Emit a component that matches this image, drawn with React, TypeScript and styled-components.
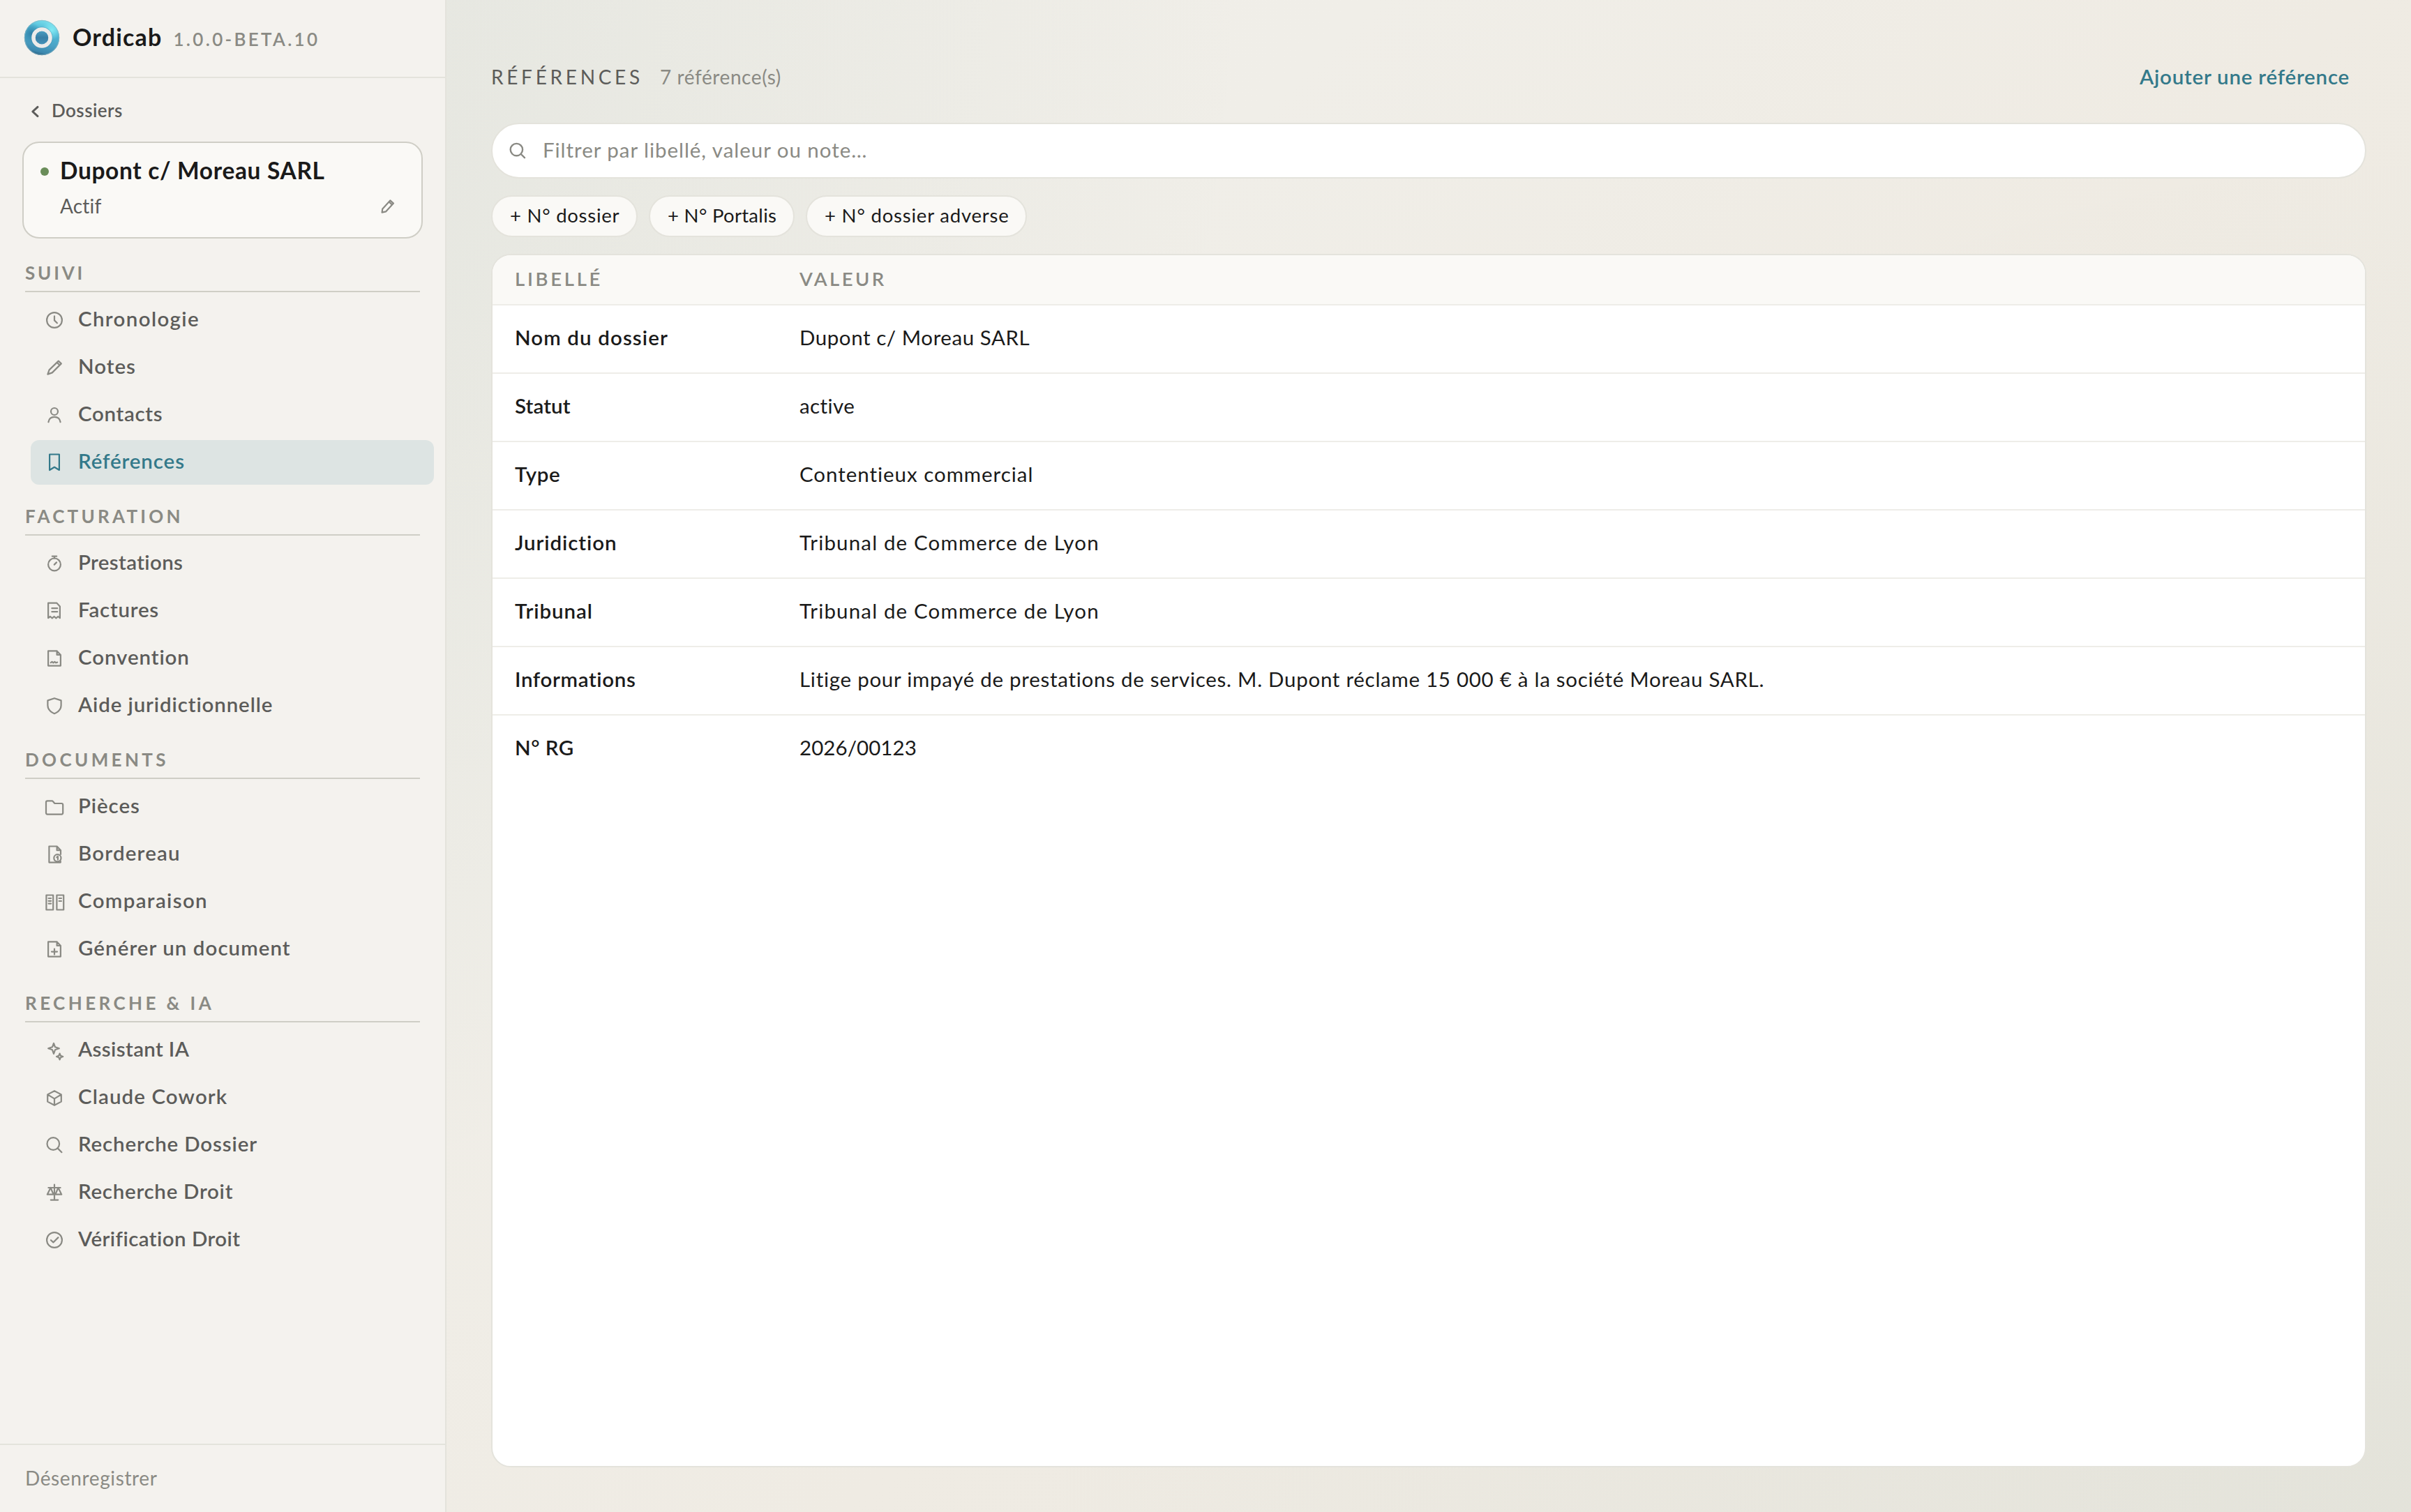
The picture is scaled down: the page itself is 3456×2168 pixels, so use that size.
import React from "react";
import styled, { createGlobalStyle, css } from "styled-components";

const color = {
  ink: "#1a1a1a",
  body: "#5c5c5a",
  muted: "#8a8a84",
  accent: "#33798a",
  accentSoft: "#dde4e3",
  sidebar: "#f4f2ee",
  surface: "#faf9f6",
  line: "#e4e3dc",
  lineSoft: "#eeede8",
  lineStrong: "#cfcec6",
};

const GlobalStyle = createGlobalStyle`
  * { box-sizing: border-box; }
  html, body { margin: 0; padding: 0; }
  body {
    font-family: Lato, "Open Sans", sans-serif;
    font-variant-ligatures: none;
    color: ${color.ink};
  }
  button { font: inherit; color: inherit; background: none; border: 0; padding: 0; margin: 0; }
`;

/* ---------- shell ---------- */

const Shell = styled.div`
  display: flex;
  width: 100vw;
  height: 100vh;
  overflow: hidden;
  background:
    radial-gradient(circle 1800px at 0 0, rgba(90, 130, 110, 0.1), rgba(90, 130, 110, 0) 100%),
    radial-gradient(circle 2000px at 100% 100%, rgba(90, 130, 110, 0.06), rgba(90, 130, 110, 0) 100%),
    linear-gradient(135deg, #f1efea 0%, #f0eee8 35%, #efebe3 60%, #ece9e1 100%);
`;

const Sidebar = styled.aside`
  display: flex;
  flex-direction: column;
  flex: none;
  width: 640px;
  background: ${color.sidebar};
  border-right: 2px solid ${color.line};
`;

const Text = styled.span<{ $track?: number }>`
  letter-spacing: ${(p) => p.$track ?? 0}px;
  white-space: nowrap;
`;

/* ---------- sidebar top ---------- */

const Brand = styled.header`
  display: flex;
  align-items: center;
  height: 112px;
  padding: 0 34px 2px;
  border-bottom: 2px solid ${color.line};
`;

const BrandLine = styled.div`
  display: flex;
  align-items: baseline;
  margin-left: 18px;
  padding-bottom: 2px;
`;

const BrandName = styled(Text)`
  font-size: 34px;
  font-weight: 700;
  line-height: 44px;
`;

const Version = styled(Text)`
  margin-left: 16px;
  font-size: 26px;
  font-weight: 600;
  color: ${color.muted};
`;

const BackLink = styled.button`
  display: flex;
  align-items: center;
  align-self: flex-start;
  gap: 14px;
  height: 40px;
  margin: 28px 0 0 40px;
  color: ${color.body};
`;

const BackLabel = styled(Text)`
  font-size: 26px;
  font-weight: 600;
  line-height: 32px;
  padding-bottom: 4px;
`;

const CaseCard = styled.section`
  display: flex;
  flex-direction: column;
  gap: 12px;
  height: 139px;
  margin: 23px 32px 0;
  padding: 19px 32px 0 24px;
  border: 2px solid ${color.lineStrong};
  border-radius: 24px;
  background: ${color.surface};
`;

const CaseRow = styled.div`
  display: flex;
  align-items: center;
  gap: 16px;
  height: 40px;
`;

const StatusDot = styled.i`
  width: 12px;
  height: 12px;
  margin-top: 3px;
  border-radius: 50%;
  background: #6a8d59;
`;

const CaseName = styled(Text)`
  font-size: 33.5px;
  font-weight: 700;
  line-height: 40px;
`;

const CaseMeta = styled.div`
  display: flex;
  align-items: center;
  justify-content: space-between;
  height: 38px;
  padding-left: 28px;
  color: ${color.muted};
`;

const CaseStatus = styled(Text)`
  font-size: 28px;
  line-height: 36px;
  color: ${color.body};
`;

/* ---------- sidebar nav ---------- */

const Nav = styled.nav`
  display: flex;
  flex-direction: column;
  gap: 29px;
  flex: 1;
  margin-top: 33px;
`;

const Group = styled.section`
  display: flex;
  flex-direction: column;
  gap: 8px;
`;

const GroupTitle = styled.h2<{ $track: number }>`
  height: 44px;
  margin: 0 36px;
  border-bottom: 2px solid ${color.lineStrong};
  font-size: 26px;
  font-weight: 700;
  line-height: 33px;
  letter-spacing: ${(p) => p.$track}px;
  color: ${color.muted};
`;

const Items = styled.div`
  display: flex;
  flex-direction: column;
  gap: 4px;
  margin: 0 16px 0 44px;
`;

const Item = styled.button<{ $active?: boolean }>`
  display: flex;
  align-items: center;
  gap: 20px;
  height: 64px;
  padding-left: 20px;
  border-radius: 12px;
  color: ${color.muted};
  ${(p) =>
    p.$active &&
    css`
      background: ${color.accentSoft};
      color: ${color.accent};
    `}
`;

const ItemLabel = styled(Text)<{ $active?: boolean }>`
  font-size: 29.5px;
  font-weight: 600;
  line-height: 40px;
  padding-bottom: 4px;
  color: ${(p) => (p.$active ? color.accent : color.body)};
`;

const Glyph = styled.svg`
  flex: none;
  width: 28px;
  height: 28px;
  overflow: visible;
  fill: none;
  stroke: currentColor;
  stroke-width: 2.2;
  stroke-linecap: round;
  stroke-linejoin: round;
`;

const Footer = styled.footer`
  display: flex;
  align-items: center;
  height: 98px;
  padding: 0 36px 3px;
  border-top: 2px solid ${color.line};
  font-size: 28px;
  color: ${color.muted};
`;

/* ---------- main ---------- */

const Main = styled.main`
  display: flex;
  flex-direction: column;
  gap: 24px;
  flex: 1;
  min-width: 0;
  padding: 80px 64px 64px;
`;

const Heading = styled.header`
  display: flex;
  align-items: baseline;
  height: 72px;
  padding: 8px 24px 0 0;
  line-height: 44px;
`;

const Title = styled.h1`
  margin: 0;
  font-size: 28px;
  font-weight: 400;
  letter-spacing: 4.7px;
  color: ${color.body};
`;

const Count = styled(Text)`
  margin-left: 24px;
  font-size: 28px;
  color: ${color.muted};
`;

const AddButton = styled.button`
  margin-left: auto;
  font-size: 29.5px;
  font-weight: 600;
  letter-spacing: 0.78px;
  color: ${color.accent};
`;

const Search = styled.label`
  display: flex;
  align-items: center;
  gap: 22px;
  height: 80px;
  padding-left: 22px;
  border: 2px solid ${color.line};
  border-radius: 40px;
  background: #fff;
  color: ${color.muted};
`;

const Placeholder = styled(Text)`
  padding-bottom: 3px;
  font-size: 29.5px;
`;

const Chips = styled.div`
  display: flex;
  gap: 16px;
`;

const Chip = styled.button<{ $width: number }>`
  width: ${(p) => p.$width}px;
  height: 60px;
  padding: 0 0 4px 25px;
  border: 2px solid ${color.line};
  border-radius: 30px;
  background: ${color.surface};
  font-size: 27.5px;
  text-align: left;
`;

const Table = styled.div`
  display: flex;
  flex-direction: column;
  flex: 1;
  overflow: hidden;
  border: 2px solid ${color.line};
  border-radius: 28px;
  background: #fff;
`;

const Row = styled.div`
  display: grid;
  grid-template-columns: 408px 1fr;
  align-items: center;
  flex: none;
  height: 98px;
  padding: 0 32px 6px;
  border-bottom: 2px solid ${color.lineSoft};
  font-size: 29.5px;

  &:last-child { height: 96px; border-bottom: 0; }
`;

const HeadRow = styled(Row)`
  height: 72px;
  padding-bottom: 4px;
  background: ${color.surface};
  font-size: 27.5px;
  font-weight: 600;
  color: ${color.muted};
`;

const Key = styled(Text)`
  font-weight: 600;
`;

/* ---------- drawings ---------- */

const Logo = () => (
  <svg width="52" height="52" viewBox="0 0 52 52">
    <defs>
      <linearGradient id="rim" x1="0.65" y1="0" x2="0.4" y2="1">
        <stop offset="0" stopColor="#7be0ee" />
        <stop offset="0.3" stopColor="#4fb9d6" />
        <stop offset="0.65" stopColor="#4ba3c6" />
        <stop offset="0.9" stopColor="#3d88ae" />
        <stop offset="1" stopColor="#245f82" />
      </linearGradient>
      <radialGradient id="shade" cx="0.2" cy="0.38" r="0.3">
        <stop offset="0" stopColor="#2c7aa3" stopOpacity="0.85" />
        <stop offset="1" stopColor="#2c7aa3" stopOpacity="0" />
      </radialGradient>
      <radialGradient id="gloss" cx="0.78" cy="0.28" r="0.28">
        <stop offset="0" stopColor="#86ecf5" stopOpacity="0.95" />
        <stop offset="1" stopColor="#86ecf5" stopOpacity="0" />
      </radialGradient>
      <linearGradient id="core" x1="0" y1="0" x2="0" y2="1">
        <stop offset="0" stopColor="#4a9cc0" />
        <stop offset="0.5" stopColor="#397fa6" />
        <stop offset="1" stopColor="#4491b8" />
      </linearGradient>
    </defs>
    <circle cx="26" cy="26" r="25.2" fill="url(#rim)" />
    <circle cx="26" cy="26" r="25.2" fill="url(#shade)" />
    <circle cx="26" cy="26" r="25.2" fill="url(#gloss)" />
    <circle cx="26" cy="26" r="24.6" fill="none" stroke="#8fb3bf" strokeWidth="1" opacity="0.7" />
    <circle cx="26" cy="26" r="15.4" fill="#3b86a8" opacity="0.5" />
    <circle cx="26" cy="26" r="12" fill="none" stroke="#ecebea" strokeWidth="5.6" />
    <circle cx="26" cy="26" r="9.2" fill="url(#core)" />
  </svg>
);

const Chevron = () => (
  <svg width="20" height="24" viewBox="0 0 20 24" fill="none" stroke="currentColor" strokeWidth="3" strokeLinecap="round" strokeLinejoin="round">
    <path d="M14 5.4 6.8 12 14 18.6" />
  </svg>
);

const PencilGlyph = styled.svg`
  flex: none;
  width: 32px;
  height: 28px;
  fill: none;
  stroke: currentColor;
  stroke-width: 2.2;
  stroke-linejoin: round;
`;

const EditPencil = () => (
  <PencilGlyph viewBox="0 0 28 28">
    <path d="M5.6 23.6 6.3 18.4 17.3 6.4 22 10.6 11 22.4 Z M15.6 8.4 20.2 12.6" />
  </PencilGlyph>
);

const SearchGlyph = () => (
  <svg width="28" height="28" viewBox="0 0 28 28" fill="none" stroke="currentColor" strokeWidth="2.4" strokeLinecap="round">
    <circle cx="12.4" cy="12.6" r="8.7" />
    <path d="M18.8 19 24 24.2" />
  </svg>
);

const sheet = "M17.6 3.4H5.1V24.6H22.9V9Z M17.6 3.4V9H22.9";

const glyphs: Record<string, React.ReactNode> = {
  clock: (
    <>
      <circle cx="14" cy="14" r="10.9" />
      <path d="M14 8.4V14.4L17.9 18.2" />
    </>
  ),
  pen: <path d="M4.4 23.6 6.6 17.4 19.8 4.6 23.8 8.4 10.8 21.4Z M17.6 6.8 21.6 10.6" />,
  person: (
    <>
      <circle cx="14" cy="9" r="5" />
      <path d="M5.4 24.2C6.2 19.6 9.6 16.9 14 16.9S21.8 19.6 22.6 24.2" />
    </>
  ),
  bookmark: <path d="M7.1 2.5H20.9V25L14 20.8 7.1 25Z" />,
  stopwatch: (
    <>
      <circle cx="14" cy="15.4" r="8.9" />
      <path d="M10.8 3.6H17.2M14 3.6V6.4M13.8 15.6 17 12.4" />
    </>
  ),
  receipt: (
    <path d="M5.1 24.2V2.6H17.2L21.9 7.4V24.2L19.2 22 16.4 24.4 13.6 22 10.8 24.4 8 22Z M10.4 10.2H18.2M10.4 15.2H18.2" />
  ),
  contract: (
    <>
      <path d={sheet} />
      <path d="M8.8 20.2 10.6 18.8 12.4 20.4 14.4 18.9 16.2 20.3 18.2 19.6" />
    </>
  ),
  shield: <path d="M14 3.2 23.6 6.4V13.4C23.6 19 19.6 22.8 14 25.2 8.4 22.8 4.4 19 4.4 13.4V6.4Z" />,
  folder: (
    <path d="M2 7.4Q2 5.4 4 5.4H10.4Q11.4 5.4 12 6.2L14.4 9H24.2Q26.2 9 26.2 11V22.6Q26.2 24.6 24.2 24.6H4Q2 24.6 2 22.6Z" />
  ),
  inventory: (
    <>
      <path d="M13 25.6H6.4V2.5H17.6L23 8.2V14 M17.6 2.5V8.2H23 M13 25.6H22.8V24" />
      <circle cx="18.4" cy="19.3" r="5.1" />
      <path d="M17.4 18.2 18.9 17V21.6" />
    </>
  ),
  compare: (
    <>
      <path d="M2.4 4.5H12.2V25.5H2.4Z M17.4 4.5H27.2V25.5H17.4Z" />
      <path d="M5.6 9H9.2M5.6 12.8H9.2M5.6 16.6H9.2M20.6 9H24M20.6 13H24" />
    </>
  ),
  docPlus: (
    <>
      <path d={sheet} />
      <path d="M14 13.6V21.6M10 17.6H18" />
    </>
  ),
  sparkles: (
    <path d="M13 4 15 9.3 20.8 11.3 15 13.3 13 19 11 13.3 5.2 11.3 11 9.3Z M21.6 18.6 22.9 21.7 26.2 23 22.9 24.3 21.6 27.4 20.3 24.3 17 23 20.3 21.7Z" />
  ),
  cube: <path d="M14 4.2 23.8 9.4V19.6L14 24.8 4.2 19.6V9.4Z M4.6 9.6 14 15.4 23.4 9.6M14 15.4V24.6" />,
  search: (
    <>
      <circle cx="12.3" cy="12" r="8.8" />
      <path d="M18.6 18.4 24.4 24.2" />
    </>
  ),
  scales: (
    <path d="M14 2.6V24.6M8.8 24.6H19.2M5.4 7H22.6M8.6 7 3.8 16.7H12.6Z M19.4 7 15.4 16.7H24.2Z" />
  ),
  verified: (
    <>
      <circle cx="14" cy="14" r="10.9" />
      <path d="M9 14.2 12.4 17.4 19.4 10.4" />
    </>
  ),
};

/* ---------- data ---------- */

type Entry = { icon: string; label: string; track: number; active?: boolean };
type Section = { title: string; track: number; items: Entry[] };

const sections: Section[] = [
  {
    title: "SUIVI",
    track: 3.8,
    items: [
      { icon: "clock", label: "Chronologie", track: 1.36 },
      { icon: "pen", label: "Notes", track: 1.0 },
      { icon: "person", label: "Contacts", track: 0.68 },
      { icon: "bookmark", label: "Références", track: 0.9, active: true },
    ],
  },
  {
    title: "FACTURATION",
    track: 4.25,
    items: [
      { icon: "stopwatch", label: "Prestations", track: 0.35 },
      { icon: "receipt", label: "Factures", track: 0.76 },
      { icon: "contract", label: "Convention", track: 0.9 },
      { icon: "shield", label: "Aide juridictionnelle", track: 0.87 },
    ],
  },
  {
    title: "DOCUMENTS",
    track: 4.35,
    items: [
      { icon: "folder", label: "Pièces", track: 0.9 },
      { icon: "inventory", label: "Bordereau", track: 1.2 },
      { icon: "compare", label: "Comparaison", track: 1.35 },
      { icon: "docPlus", label: "Générer un document", track: 1.05 },
    ],
  },
  {
    title: "RECHERCHE & IA",
    track: 4.42,
    items: [
      { icon: "sparkles", label: "Assistant IA", track: 0.36 },
      { icon: "cube", label: "Claude Cowork", track: 1.1 },
      { icon: "search", label: "Recherche Dossier", track: 0.84 },
      { icon: "scales", label: "Recherche Droit", track: 0.72 },
      { icon: "verified", label: "Vérification Droit", track: 0.44 },
    ],
  },
];

const suggestions = [
  { label: "+ N° dossier", track: 0.74, width: 210 },
  { label: "+ N° Portalis", track: 0.3, width: 209 },
  { label: "+ N° dossier adverse", track: 0.8, width: 317 },
];

const references = [
  { key: "Nom du dossier", keyTrack: 1.11, value: "Dupont c/ Moreau SARL", track: 0.56 },
  { key: "Statut", keyTrack: 0.1, value: "active", track: 0.4 },
  { key: "Type", keyTrack: 0.6, value: "Contentieux commercial", track: 0.96 },
  { key: "Juridiction", keyTrack: 0.9, value: "Tribunal de Commerce de Lyon", track: 1.15 },
  { key: "Tribunal", keyTrack: 0.95, value: "Tribunal de Commerce de Lyon", track: 1.15 },
  {
    key: "Informations",
    keyTrack: 0.64,
    value:
      "Litige pour impayé de prestations de services. M. Dupont réclame 15 000 € à la société Moreau SARL.",
    track: 0.72,
  },
  { key: "N° RG", keyTrack: 0.5, value: "2026/00123", track: 0.05 },
];

export default function App() {
  return (
    <>
      <GlobalStyle />
      <Shell>
        <Sidebar>
          <Brand>
            <Logo />
            <BrandLine>
              <BrandName $track={1.17}>Ordicab</BrandName>
              <Version $track={3.3}>1.0.0-BETA.10</Version>
            </BrandLine>
          </Brand>

          <BackLink>
            <Chevron />
            <BackLabel $track={0.45}>Dossiers</BackLabel>
          </BackLink>

          <CaseCard>
            <CaseRow>
              <StatusDot />
              <CaseName $track={0.65}>Dupont c/ Moreau SARL</CaseName>
            </CaseRow>
            <CaseMeta>
              <CaseStatus $track={0.2}>Actif</CaseStatus>
              <EditPencil />
            </CaseMeta>
          </CaseCard>

          <Nav>
            {sections.map((section) => (
              <Group key={section.title}>
                <GroupTitle $track={section.track}>{section.title}</GroupTitle>
                <Items>
                  {section.items.map((item) => (
                    <Item key={item.label} $active={item.active}>
                      <Glyph viewBox="0 0 28 28">{glyphs[item.icon]}</Glyph>
                      <ItemLabel $active={item.active} $track={item.track}>
                        {item.label}
                      </ItemLabel>
                    </Item>
                  ))}
                </Items>
              </Group>
            ))}
          </Nav>

          <Footer>
            <Text $track={0.62}>Désenregistrer</Text>
          </Footer>
        </Sidebar>

        <Main>
          <Heading>
            <Title>RÉFÉRENCES</Title>
            <Count $track={0.6}>7 référence(s)</Count>
            <AddButton>Ajouter une référence</AddButton>
          </Heading>

          <Search>
            <SearchGlyph />
            <Placeholder $track={0.96}>Filtrer par libellé, valeur ou note…</Placeholder>
          </Search>

          <Chips>
            {suggestions.map((chip) => (
              <Chip key={chip.label} $width={chip.width}>
                <Text $track={chip.track}>{chip.label}</Text>
              </Chip>
            ))}
          </Chips>

          <Table>
            <HeadRow>
              <Text $track={3.7}>LIBELLÉ</Text>
              <Text $track={3.44}>VALEUR</Text>
            </HeadRow>
            {references.map((row) => (
              <Row key={row.key}>
                <Key $track={row.keyTrack}>{row.key}</Key>
                <Text $track={row.track}>{row.value}</Text>
              </Row>
            ))}
          </Table>
        </Main>
      </Shell>
    </>
  );
}
